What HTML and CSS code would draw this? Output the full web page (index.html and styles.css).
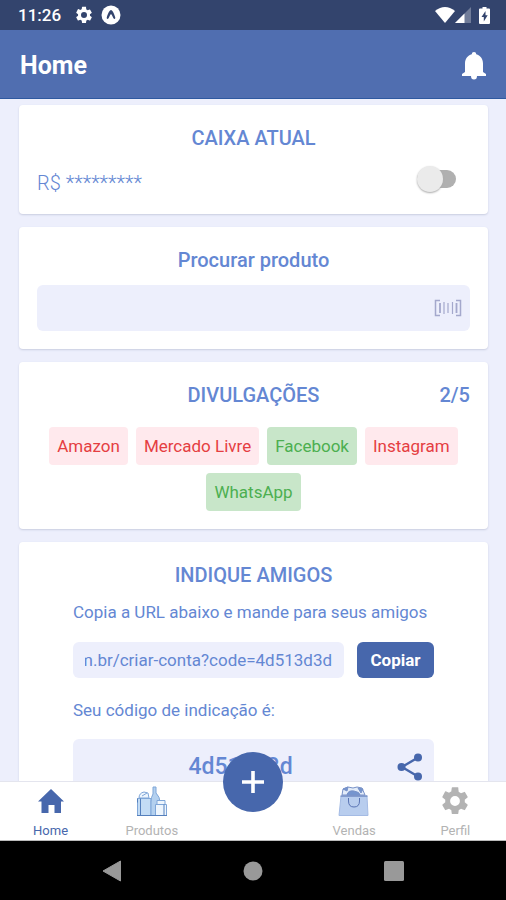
FILE: index.html
```html
<!DOCTYPE html>
<html lang="pt-BR">
<head>
<meta charset="utf-8">
<meta name="viewport" content="width=device-width, initial-scale=1">
<title>Home</title>
<link rel="stylesheet" href="styles.css">
</head>
<body>
<div class="status">
  <span class="clock">11:26</span>
  <svg class="status-icon" width="20" height="20" viewBox="0 0 24 24" fill="currentColor"><path d="M19.14 12.94c.04-.3.06-.61.06-.94s-.02-.64-.07-.94l2.03-1.58a.5.5 0 0 0 .12-.61l-1.92-3.32a.49.49 0 0 0-.59-.22l-2.39.96a7 7 0 0 0-1.62-.94l-.36-2.54A.48.48 0 0 0 13.92 2h-3.84a.48.48 0 0 0-.47.41l-.36 2.54c-.59.24-1.13.57-1.62.94l-2.39-.96a.48.48 0 0 0-.59.22L2.74 8.87a.48.48 0 0 0 .12.61l2.03 1.58a6.6 6.6 0 0 0 0 1.88l-2.03 1.58a.5.5 0 0 0-.12.61l1.92 3.32c.12.22.37.29.59.22l2.39-.96c.5.38 1.03.7 1.62.94l.36 2.54c.05.24.24.41.48.41h3.84c.24 0 .44-.17.47-.41l.36-2.54a7 7 0 0 0 1.62-.94l2.39.96c.22.08.47 0 .59-.22l1.92-3.32a.48.48 0 0 0-.12-.61zM12 15.6A3.6 3.6 0 1 1 12 8.4a3.6 3.6 0 0 1 0 7.2z"/></svg>
  <svg class="status-icon" width="20" height="20" viewBox="0 0 20 20"><circle cx="10" cy="10" r="9.5" fill="#fff"/><path d="M10 5C8.600 5 6.500 9.500 5.800 12.300c-.4 1.900 1 2.300 1.900.8C8.500 11.500 9.300 9.300 10 9.300s1.500 2.200 2.300 3.800c.9 1.500 2.300 1.100 1.900-.8C13.500 9.500 11.400 5 10 5z" fill="#33446d"/></svg>
  <span class="spacer"></span>
  <svg width="20" height="16" viewBox="0 0 20 16"><path d="M0 4Q10-4 20 4L10 16z" fill="#fff"/></svg>
  <svg width="16" height="16" viewBox="0 0 16 16"><path d="M16 0v16H0z" fill="#fff" opacity=".3"/><path d="M9.5 6.5V16H0z" fill="#fff"/></svg>
  <svg class="battery" width="11" height="17" viewBox="0 0 11 17"><path d="M3.500 0h4v1.500H10q1 0 1 1V16q0 1-1 1H1q-1 0-1-1V2.500q0-1 1-1h2.500z" fill="#fff"/><path d="M6.500 4 2.500 10h2.300v4.500L8.700 8.300H6.500z" fill="#33446d"/></svg>
</div>
<header class="topbar">
  <h1>Home</h1>
  <button class="icon-button" type="button" aria-label="Notificações"><svg width="24" height="28" viewBox="0 0 24 28" fill="currentColor"><path d="M12 0a2.200 2.200 0 0 1 2.200 2.300C18.300 3.300 21 7 21 11.500V20l3 2v2H0v-2l3-2v-8.500C3 7 5.700 3.300 9.800 2.300A2.200 2.200 0 0 1 12 0zM9 24h6a3 3.500 0 0 1-6 0z"/></svg></button>
</header>
<main class="content">
  <section class="card">
    <h2>CAIXA ATUAL</h2>
    <div class="balance">
      <label for="show">R$ *********</label>
      <input class="switch" id="show" type="checkbox" role="switch">
    </div>
  </section>
  <section class="card">
    <h2><label for="search">Procurar produto</label></h2>
    <div class="search">
      <input id="search" type="text">
      <button class="icon-button scan" type="button" aria-label="Ler código de barras"><svg width="28" height="18" viewBox="0 0 28 18" fill="none" stroke="currentColor"><path d="M6 1.500H1.500v15H6M22 1.500h4.500v15H22" stroke-width="1.500"/><path d="M6 4v10M22.500 4v10" stroke-width="1.800"/><path d="M10 3v12M14 4v10M18.500 3v12" stroke-width="1.200"/></svg></button>
    </div>
  </section>
  <section class="card">
    <div class="title-row"><h2>DIVULGAÇÕES</h2><strong>2/5</strong></div>
    <div class="tags">
      <button class="tag off" type="button">Amazon</button>
      <button class="tag off" type="button">Mercado Livre</button>
      <button class="tag on" type="button">Facebook</button>
      <button class="tag off" type="button">Instagram</button>
      <button class="tag on" type="button">WhatsApp</button>
    </div>
  </section>
  <section class="card">
    <h2>INDIQUE AMIGOS</h2>
    <div class="invite">
      <label for="url">Copia a URL abaixo e mande para seus amigos</label>
      <div class="url-row">
        <input id="url" type="text" readonly value="m.br/criar-conta?code=4d513d3d">
        <button class="copy" type="button">Copiar</button>
      </div>
      <p>Seu código de indicação é:</p>
      <div class="code">
        <strong>4d513d3d</strong>
        <button class="icon-button share" type="button" aria-label="Compartilhar"><svg width="26" height="28" viewBox="0 0 26 28"><path d="M21 4.500 5 14l16 9.500" fill="none" stroke="currentColor" stroke-width="2.400"/><g fill="currentColor"><circle cx="21" cy="4.500" r="4"/><circle cx="4.500" cy="14" r="4"/><circle cx="21" cy="23.500" r="4"/></g></svg></button>
      </div>
    </div>
  </section>
</main>
<nav class="tabs">
  <a class="tab active" href="#home"><svg width="26" height="30" viewBox="0 0 26 30" fill="currentColor"><path d="M13 3 26 15.500h-3V27h-6.500v-8h-6v8H3.500V15.500H0z"/></svg>Home</a>
  <a class="tab" href="#produtos"><svg width="32" height="30" viewBox="0 0 32 30" stroke="#7fa6d8" stroke-width="1"><path d="M3 12Q3 7 8 6l4 1 1 5z" fill="#edf5fd"/><path d="M6 10l5-3" fill="none"/><path d="M1.500 12.500H15v17H1.500z" fill="#c3dcf5"/><path d="M4.500 12.500v17" fill="none" stroke="#5580bd"/><path d="M17 1h3v6q4 4 4 9v13.500h-9V16q0-5 2-8z" fill="#b3d0ef"/><path d="M19.500 18.500h11v11h-11zM21 14.500h8v4h-8z" fill="#edf5fd"/><path d="M28 18.500v11M1 29.500h30M1.500 12.500v4" fill="none" stroke="#5580bd"/></svg>Produtos</a>
  <span class="tab-slot"><button class="add" type="button" aria-label="Adicionar"><svg width="24" height="24" viewBox="0 0 24 24"><path d="M12 1v22M1 12h22" stroke="#fff" stroke-width="3.600"/></svg></button></span>
  <a class="tab" href="#vendas"><svg width="32" height="30" viewBox="0 0 32 30" stroke="#7892c8" stroke-width="1"><path d="M4 9 5 3l5-2 5 1 4-1 5 1 3 7z" fill="#e3ecf9"/><path d="M9 9q1-5 7-4t6 4zM5 3l5-2-1 4zM20 2l3 5 2-4z" fill="#7595cf"/><path d="M3 10h26l1 19.500H1z" fill="#b8cdee" stroke="#a4bbe4"/><path d="M2.500 10h27" stroke="#5974b4"/><path d="M10.500 12v3q0 6 5.500 6t5.500-6v-3" fill="none" stroke="#5974b4"/></svg>Vendas</a>
  <a class="tab" href="#perfil"><svg width="30" height="30" viewBox="1 1 22 22" fill="currentColor"><path d="M19.14 12.94c.04-.3.06-.61.06-.94s-.02-.64-.07-.94l2.03-1.58a.5.5 0 0 0 .12-.61l-1.92-3.32a.49.49 0 0 0-.59-.22l-2.39.96a7 7 0 0 0-1.62-.94l-.36-2.54A.48.48 0 0 0 13.92 2h-3.84a.48.48 0 0 0-.47.41l-.36 2.54c-.59.24-1.13.57-1.62.94l-2.39-.96a.48.48 0 0 0-.59.22L2.74 8.87a.48.48 0 0 0 .12.61l2.03 1.58a6.6 6.6 0 0 0 0 1.88l-2.03 1.58a.5.5 0 0 0-.12.61l1.92 3.32c.12.22.37.29.59.22l2.39-.96c.5.38 1.03.7 1.62.94l.36 2.54c.05.24.24.41.48.41h3.84c.24 0 .44-.17.47-.41l.36-2.54a7 7 0 0 0 1.62-.94l2.39.96c.22.08.47 0 .59-.22l1.92-3.32a.48.48 0 0 0-.12-.61zM12 15.6A3.6 3.6 0 1 1 12 8.4a3.6 3.6 0 0 1 0 7.2z"/></svg>Perfil</a>
</nav>
<div class="system">
  <svg width="20" height="22" viewBox="0 0 20 22"><path d="M18.500 1v20L1 11z" fill="#999" stroke="#999" stroke-linejoin="round"/></svg>
  <svg width="20" height="20" viewBox="0 0 20 20"><circle cx="10" cy="10" r="9.500" fill="#999"/></svg>
  <svg width="20" height="20" viewBox="0 0 20 20"><rect width="20" height="20" rx="1.500" fill="#999"/></svg>
</div>
<script>
  const url = document.getElementById("url");
  url.scrollLeft = url.scrollWidth;
</script>
</body>
</html>
```
FILE: styles.css
```css
* { box-sizing: border-box; }
body {
  margin: 0;
  height: 100vh;
  display: flex;
  flex-direction: column;
  background: #edeffc;
  color: #6487d3;
  font: 17px/24px Roboto, "Liberation Sans", sans-serif;
}
button, input { font: inherit; color: inherit; border: 0; margin: 0; }
button { cursor: pointer; }
svg { display: block; }
h1, h2, p { margin: 0; }

.status {
  flex: none;
  height: 30px;
  padding: 0 16px 0 18px;
  display: flex;
  align-items: center;
  background: #33446d;
  color: #fff;
  font-weight: 500;
}
.clock { margin-right: 6px; }
.status-icon { margin-left: 7px; }
.spacer { flex: 1; }
.battery { margin-left: 8px; }
.status svg { flex: none; }

.topbar {
  flex: none;
  height: 69px;
  padding: 3px 20px 0;
  display: flex;
  align-items: center;
  justify-content: space-between;
  background: #506eb0;
  border-bottom: 1px solid #2e59a0;
  color: #fff;
}
.topbar h1 { font-size: 25px; line-height: 32px; font-weight: 700; }
.icon-button { padding: 0; background: none; }

.content {
  flex: 1;
  min-height: 0;
  overflow: hidden;
  padding: 6px 18px 0 19px;
  display: flex;
  flex-direction: column;
  gap: 13px;
}
.card {
  flex: none;
  padding: 21px 18px 18px;
  background: #fff;
  border-radius: 4px;
  box-shadow: 0 1px 2px #c9cde0;
}
h2, .title-row strong { font-size: 20px; line-height: 24px; font-weight: 500; }
h2 { text-align: center; }

.balance {
  display: flex;
  justify-content: space-between;
  align-items: flex-start;
  margin-top: 20px;
  padding-right: 14px;
  font-size: 20px;
  line-height: 26px;
  font-weight: 300;
}
.switch {
  appearance: none;
  width: 39px;
  height: 18px;
  display: flex;
  align-items: center;
  background: #b0b0b0;
  border-radius: 9px;
}
.switch::before {
  content: "";
  width: 26px;
  height: 26px;
  border-radius: 50%;
  background: #ebebeb;
  box-shadow: 0 1px 2px #aaa;
}
.switch:checked { justify-content: flex-end; }

.search { display: flex; margin-top: 13px; padding: 0 8px; background: #edeffc; border-radius: 6px; }
.search input { flex: 1; min-width: 0; height: 46px; background: none; }
.scan { color: #a4a8cc; }

.title-row { display: grid; grid-template-columns: 1fr auto 1fr; }
.title-row h2 { grid-column: 2; }
.title-row strong { text-align: right; }
.tags { display: flex; flex-wrap: wrap; justify-content: center; gap: 8px; margin-top: 20px; }
.tag { height: 38px; padding: 0 8px; border-radius: 4px; }
.off { background: #ffe9ed; color: #e53e42; }
.on { background: #c8e6c9; color: #4caf50; }

.invite { display: flex; flex-direction: column; width: 361px; max-width: 100%; margin: 13px auto 0; }
.url-row { display: flex; gap: 13px; margin: 18px 0 20px; }
.url-row input { flex: 1; min-width: 0; height: 36px; padding: 0 12px; background: #edeffc; border-radius: 6px; }
.copy { width: 77px; padding: 0; border-radius: 6px; background: #4767ac; color: #fff; font-weight: 700; }
.code { display: flex; align-items: center; height: 56px; margin-top: 17px; padding: 0 11px; background: #edeffc; border-radius: 6px; }
.code strong { flex: 1; text-align: center; font-size: 23px; font-weight: 500; }
.share { color: #4767ac; }

.tabs {
  flex: none;
  height: 60px;
  display: grid;
  grid-template-columns: repeat(5, 1fr);
  background: #fff;
  border-top: 1px solid #e4e5ee;
  border-bottom: 1px solid #bbb;
}
.tab {
  display: flex;
  flex-direction: column;
  align-items: center;
  padding-top: 4px;
  gap: 7px;
  color: #b3b3b3;
  font-size: 13px;
  line-height: 16px;
  text-decoration: none;
}
.active { color: #4767ac; }
.tab-slot { position: relative; }
.add {
  position: absolute;
  top: -30px;
  left: 50%;
  width: 60px;
  height: 60px;
  margin-left: -30px;
  display: grid;
  place-items: center;
  padding: 0;
  border-radius: 50%;
  background: #4767ac;
}

.system {
  flex: none;
  height: 59px;
  padding: 0 102px;
  display: flex;
  align-items: center;
  justify-content: space-between;
  background: #000;
}
```
